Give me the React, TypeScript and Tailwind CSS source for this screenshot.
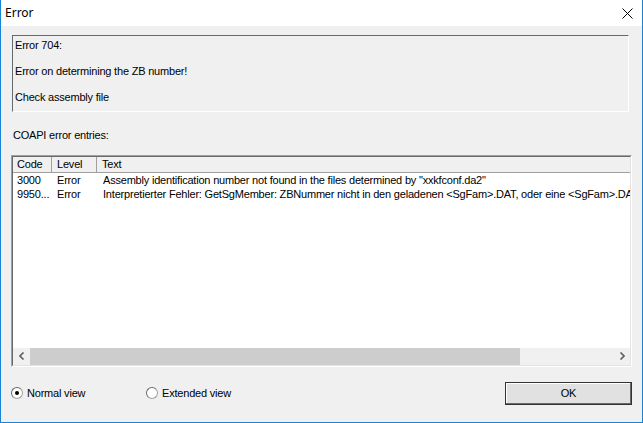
import React from 'react'

const rows = [
  { code: '3000', level: 'Error', text: 'Assembly identification number not found in the files determined by "xxkfconf.da2"' },
  { code: '9950...', level: 'Error', text: 'Interpretierter Fehler: GetSgMember: ZBNummer nicht in den geladenen <SgFam>.DAT, oder eine <SgFam>.DA' },
]

function Radio({ checked, label }: { checked?: boolean; label: string }) {
  return (
    <label className="flex items-center gap-[4px]">
      <span className="relative w-[12px] h-[12px] rounded-full bg-white border border-[#a0a0a0] border-t-[#696969] border-l-[#696969] flex items-center justify-center">
        {checked && <span className="w-[4px] h-[4px] rounded-full bg-black" />}
      </span>
      <span>{label}</span>
    </label>
  )
}

export default function App() {
  return (
    <div
      className="w-[643px] h-[423px] flex flex-col bg-[#f0f0f0] border-x border-b border-[#1883d7] text-[11px] tracking-[-0.2px] text-black overflow-hidden"
      style={{ fontFamily: '"Liberation Sans", Arial, sans-serif' }}
    >
      {/* title bar */}
      <div className="h-[26px] bg-white flex items-center justify-between pl-[4px] pr-[8px] shrink-0">
        <span className="text-[12px] tracking-normal" style={{ fontFamily: '"Noto Sans", sans-serif' }}>Error</span>
        <svg width="11" height="11" viewBox="0 0 11 11" className="mr-[1px]">
          <path d="M0.5 0.5 L10.5 10.5 M10.5 0.5 L0.5 10.5" stroke="#000" strokeWidth="1" />
        </svg>
      </div>

      <div className="flex-1 flex flex-col px-[10px]">
        {/* message */}
        <div className="mt-[9px] ml-[1px] mr-[3px] h-[77px] border border-t-[#696969] border-l-[#696969] border-r-white border-b-white pl-[2px] pt-[3px] leading-[13px] flex flex-col gap-[13px]">
          <div>Error 704:</div>
          <div>Error on determining the ZB number!</div>
          <div>Check assembly file</div>
        </div>

        <div className="mt-[15px] ml-[2px]">COAPI error entries:</div>

        {/* entries list */}
        <div className="mt-[11px] h-[212px] border border-[#a0a0a0] border-r-white border-b-white flex flex-col overflow-hidden">
          <div className="flex-1 flex flex-col bg-white border border-t-[#696969] border-l-[#696969] border-r-[#e3e3e3] border-b-[#e3e3e3] overflow-hidden">
            <div className="flex h-[16px] bg-[#f0f0f0] border-b border-[#a0a0a0] shrink-0">
              <div className="w-[39px] pl-[4px] border-r border-[#a0a0a0] flex items-center">Code</div>
              <div className="w-[45px] pl-[5px] border-r border-[#a0a0a0] flex items-center">Level</div>
              <div className="flex-1 pl-[5px] flex items-center">Text</div>
            </div>
            <div className="flex-1">
              {rows.map((r) => (
                <div key={r.code} className="flex h-[14px] leading-[14px] whitespace-nowrap">
                  <div className="w-[39px] pl-[4px] shrink-0">{r.code}</div>
                  <div className="w-[45px] pl-[5px] shrink-0">{r.level}</div>
                  <div className="pl-[6px]">{r.text}</div>
                </div>
              ))}
            </div>
            {/* horizontal scrollbar */}
            <div className="h-[17px] bg-[#f0f0f0] flex items-center shrink-0">
              <div className="w-[17px] flex justify-center">
                <svg width="6" height="8" viewBox="0 0 6 8">
                  <path d="M4.5 0.5 L1 4 L4.5 7.5" stroke="#606060" strokeWidth="1.6" fill="none" />
                </svg>
              </div>
              <div className="w-[490px] h-full bg-[#cdcdcd]" />
              <div className="flex-1" />
              <div className="w-[17px] flex justify-center">
                <svg width="6" height="8" viewBox="0 0 6 8">
                  <path d="M1.5 0.5 L5 4 L1.5 7.5" stroke="#606060" strokeWidth="1.6" fill="none" />
                </svg>
              </div>
            </div>
          </div>
        </div>

        {/* footer */}
        <div className="flex items-center mt-[15px]">
          <div className="w-[135px]"><Radio checked label="Normal view" /></div>
          <Radio label="Extended view" />
          <div className="flex-1" />
          <button className="w-[127px] h-[23px] bg-[#e1e1e1] border border-[#333] shadow-[inset_-1px_-1px_0_#696969,inset_1px_1px_0_#fff]">
            OK
          </button>
        </div>
      </div>
    </div>
  )
}
